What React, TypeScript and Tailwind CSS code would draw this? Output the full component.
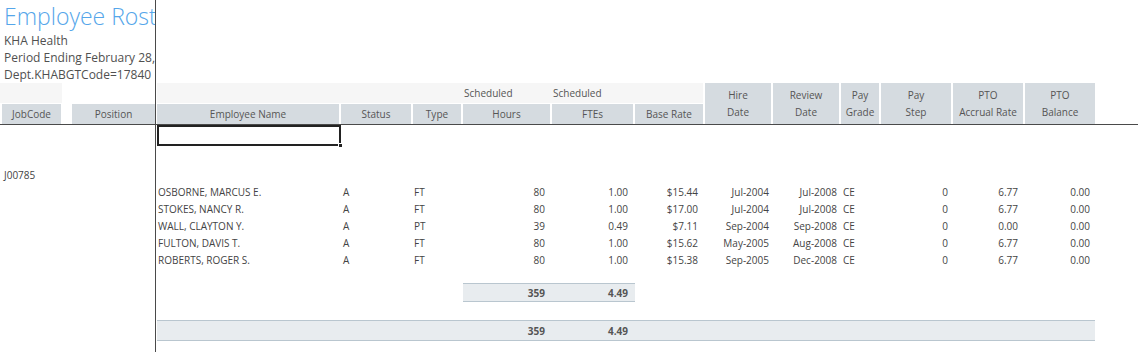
import React from 'react'

// column template of the scrolling pane, shared by header and body rows
const COLS =
  'grid grid-cols-[184px_72px_50px_89px_83px_70px_68px_68px_40px_72px_72px_72px]'

const HEAD = 'bg-[#d5dbe0] border-r-2 border-white flex items-center justify-center'

type Row = {
  name: string
  status: string
  type: string
  hours: string
  ftes: string
  rate: string
  hire: string
  review: string
  grade: string
  step: string
  accrual: string
  balance: string
}

const ROWS: Row[] = [
  { name: 'OSBORNE, MARCUS E.', status: 'A', type: 'FT', hours: '80', ftes: '1.00', rate: '$15.44', hire: 'Jul-2004', review: 'Jul-2008', grade: 'CE', step: '0', accrual: '6.77', balance: '0.00' },
  { name: 'STOKES, NANCY R.', status: 'A', type: 'FT', hours: '80', ftes: '1.00', rate: '$17.00', hire: 'Jul-2004', review: 'Jul-2008', grade: 'CE', step: '0', accrual: '6.77', balance: '0.00' },
  { name: 'WALL, CLAYTON Y.', status: 'A', type: 'PT', hours: '39', ftes: '0.49', rate: '$7.11', hire: 'Sep-2004', review: 'Sep-2008', grade: 'CE', step: '0', accrual: '0.00', balance: '0.00' },
  { name: 'FULTON, DAVIS T.', status: 'A', type: 'FT', hours: '80', ftes: '1.00', rate: '$15.62', hire: 'May-2005', review: 'Aug-2008', grade: 'CE', step: '0', accrual: '6.77', balance: '0.00' },
  { name: 'ROBERTS, ROGER S.', status: 'A', type: 'FT', hours: '80', ftes: '1.00', rate: '$15.38', hire: 'Sep-2005', review: 'Dec-2008', grade: 'CE', step: '0', accrual: '6.77', balance: '0.00' },
]

const TWO_LINE = [
  ['Hire', 'Date'],
  ['Review', 'Date'],
  ['Pay', 'Grade'],
  ['Pay', 'Step'],
  ['PTO', 'Accrual Rate'],
  ['PTO', 'Balance'],
]

export default function App() {
  return (
    <div className="w-[1138px] h-[352px] overflow-hidden bg-white font-['Open_Sans',sans-serif] text-[10px] text-[#444444] leading-none">
      {/* ─── Frozen top: title + headers ─── */}
      <div className="flex h-[124px]">
        {/* frozen left pane clips the report title, like the sheet does */}
        <div className="w-[155px] shrink-0 overflow-hidden flex flex-col">
          <div className="h-[32px] pl-[4px] flex items-center whitespace-nowrap text-[23px] font-light text-[#55a6ea]">
            Employee Roster
          </div>
          <div className="h-[17px] pl-[4px] flex items-center whitespace-nowrap text-[12px] text-[#505050]">KHA Health</div>
          <div className="h-[17px] pl-[4px] flex items-center whitespace-nowrap text-[12px] text-[#505050]">Period Ending February 28, 2009</div>
          <div className="h-[17px] pl-[4px] flex items-center whitespace-nowrap text-[12px] text-[#505050]">Dept.KHABGTCode=17840</div>
          <div className="h-[20px] flex">
            <div className="w-[62px] bg-[#f6f6f6]" />
          </div>
          <div className="h-px" />
          <div className="h-[20px] flex text-[#555555]">
            <div className="ml-[2px] w-[59px] bg-[#d5dbe0] flex items-center justify-center">JobCode</div>
            <div className="w-[11px]" />
            <div className="w-[83px] bg-[#d5dbe0] flex items-center justify-center">Position</div>
          </div>
        </div>
        <div className="w-px bg-[#4a4a4a] shrink-0" />
        <div className="flex-1 flex flex-col pl-px">
          <div className="h-[83px]" />
          <div className={`${COLS} grid-rows-[20px_1px_20px] text-[#555555]`}>
            <div className="bg-[#f6f6f6]" />
            <div className="bg-[#f6f6f6]" />
            <div className="bg-[#f6f6f6]" />
            <div className="bg-[#f6f6f6] flex items-center pl-px">Scheduled</div>
            <div className="bg-[#f6f6f6] flex items-center pl-px">Scheduled</div>
            <div className="bg-[#f6f6f6] border-r-2 border-white" />
            {TWO_LINE.map(([a, b]) => (
              <div
                key={a + b}
                className="row-span-3 bg-[#d5dbe0] border-r-2 border-white flex flex-col items-center justify-around py-[3px]"
              >
                <span>{a}</span>
                <span>{b}</span>
              </div>
            ))}
            <div className="col-span-6" />
            <div className={HEAD}>Employee Name</div>
            <div className={HEAD}>Status</div>
            <div className={HEAD}>Type</div>
            <div className={HEAD}>Hours</div>
            <div className={HEAD}>FTEs</div>
            <div className={HEAD}>Base Rate</div>
          </div>
        </div>
      </div>

      <div className="h-px bg-[#4a4a4a]" />

      {/* ─── Body ─── */}
      <div className="flex h-[227px]">
        <div className="w-[155px] shrink-0 flex flex-col">
          <div className="h-[21px]" />
          <div className="h-[20px]" />
          <div className="h-[17px] pl-[4px] flex items-center">J00785</div>
        </div>
        <div className="w-px bg-[#4a4a4a] shrink-0" />
        <div className="flex-1 flex flex-col pl-px">
          {/* selected cell */}
          <div className="h-[21px] flex">
            <div className="relative w-[184px] border-2 border-[#222222]">
              <div className="absolute -right-[4px] -bottom-[4px] w-[5px] h-[5px] bg-[#222222] border border-white" />
            </div>
          </div>
          <div className="h-[20px]" />
          <div className="h-[17px]" />
          {ROWS.map((r) => (
            <div key={r.name} className={`${COLS} h-[17px] items-center`}>
              <div className="pl-px whitespace-nowrap">{r.name}</div>
              <div className="pl-[2px]">{r.status}</div>
              <div className="pl-px">{r.type}</div>
              <div className="text-right pr-[7px]">{r.hours}</div>
              <div className="text-right pr-[7px]">{r.ftes}</div>
              <div className="text-right pr-[7px]">{r.rate}</div>
              <div className="text-right pr-[4px]">{r.hire}</div>
              <div className="text-right pr-[4px]">{r.review}</div>
              <div className="pl-[2px]">{r.grade}</div>
              <div className="text-right pr-[5px]">{r.step}</div>
              <div className="text-right pr-[7px]">{r.accrual}</div>
              <div className="text-right pr-[7px]">{r.balance}</div>
            </div>
          ))}
          <div className="h-[15px]" />
          {/* job code subtotal */}
          <div className={`${COLS} h-[19px]`}>
            <div className="col-span-3" />
            <div className="bg-[#e8ecef] border-y border-[#b9c6cf] flex items-center justify-end pr-[7px] font-bold text-[#555555]">359</div>
            <div className="bg-[#e8ecef] border-y border-[#b9c6cf] flex items-center justify-end pr-[7px] font-bold text-[#555555]">4.49</div>
          </div>
          <div className="h-[18px]" />
          {/* grand total */}
          <div className={`${COLS} h-[21px]`}>
            <div className="col-span-3 bg-[#e8ecef] border-y border-[#b9c6cf]" />
            <div className="bg-[#e8ecef] border-y border-[#b9c6cf] flex items-center justify-end pr-[7px] font-bold text-[#555555]">359</div>
            <div className="bg-[#e8ecef] border-y border-[#b9c6cf] flex items-center justify-end pr-[7px] font-bold text-[#555555]">4.49</div>
            <div className="col-span-7 bg-[#e8ecef] border-y border-[#b9c6cf] mr-[2px]" />
          </div>
        </div>
      </div>
    </div>
  )
}
